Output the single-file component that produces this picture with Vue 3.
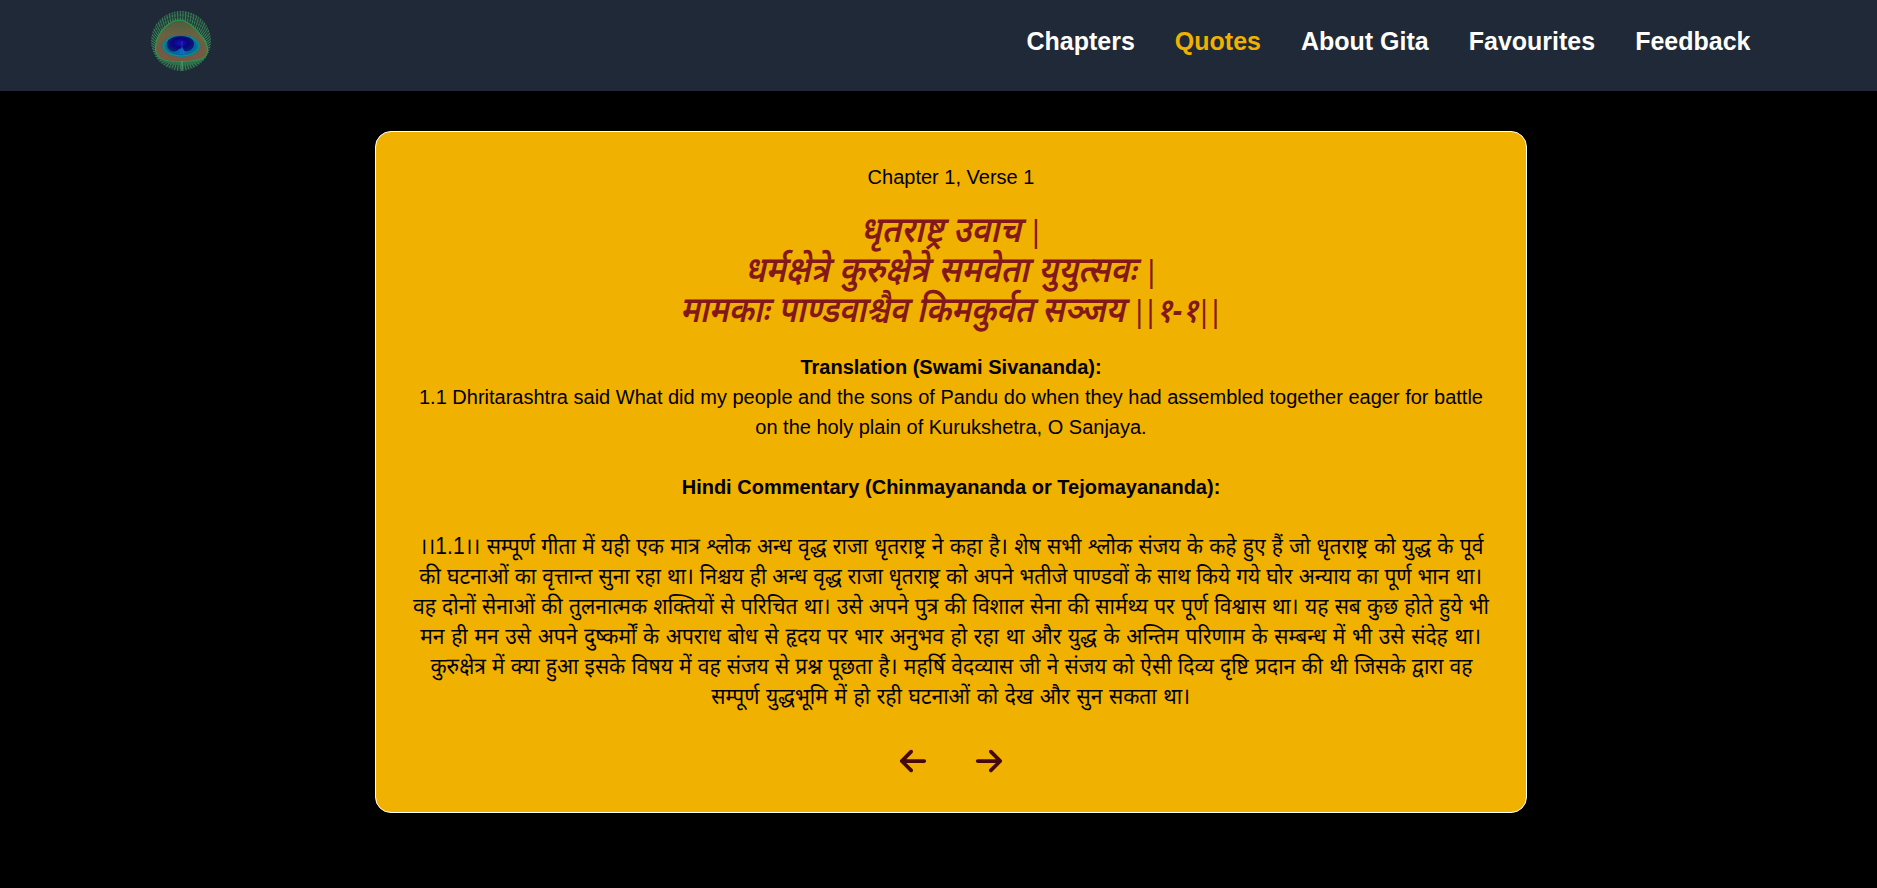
<script setup>
const links = ['Chapters', 'Quotes', 'About Gita', 'Favourites', 'Feedback']
const active = 'Quotes'

// Devanagari is set slightly condensed; each line is justified to its own measure.
const BODY_SCALE = 0.915
const verse = [
  { text: 'धृतराष्ट्र उवाच |', width: 181, scale: 0.9 },
  { text: 'धर्मक्षेत्रे कुरुक्षेत्रे समवेता युयुत्सवः |', width: 413, scale: 0.895 },
  { text: 'मामकाः पाण्डवाश्चैव किमकुर्वत सञ्जय ||१-१||', width: 541, scale: 0.871 },
].map((l) => ({ ...l, parts: l.text.split(/(\||१-१)/).filter(Boolean) }))
const commentary = [
  { text: '।।1.1।। सम्पूर्ण गीता में यही एक मात्र श्लोक अन्ध वृद्ध राजा धृतराष्ट्र ने कहा है। शेष सभी श्लोक संजय के कहे हुए हैं जो धृतराष्ट्र को युद्ध के पूर्व', width: 1064 },
  { text: 'की घटनाओं का वृत्तान्त सुना रहा था। निश्चय ही अन्ध वृद्ध राजा धृतराष्ट्र को अपने भतीजे पाण्डवों के साथ किये गये घोर अन्याय का पूर्ण भान था।', width: 1063 },
  { text: 'वह दोनों सेनाओं की तुलनात्मक शक्तियों से परिचित था। उसे अपने पुत्र की विशाल सेना की सार्मथ्य पर पूर्ण विश्वास था। यह सब कुछ होते हुये भी', width: 1076 },
  { text: 'मन ही मन उसे अपने दुष्कर्मों के अपराध बोध से हृदय पर भार अनुभव हो रहा था और युद्ध के अन्तिम परिणाम के सम्बन्ध में भी उसे संदेह था।', width: 1061 },
  { text: 'कुरुक्षेत्र में क्या हुआ इसके विषय में वह संजय से प्रश्न पूछता है। महर्षि वेदव्यास जी ने संजय को ऐसी दिव्य दृष्टि प्रदान की थी जिसके द्वारा वह', width: 1042 },
  { text: 'सम्पूर्ण युद्धभूमि में हो रही घटनाओं को देख और सुन सकता था।', width: 479 },
]
const lineStyle = (width, scale) => ({ width: `${width / scale}px`, transform: `scaleX(${scale})` })

// Barbs of the feather fan out from the eye.
const barbs = Array.from({ length: 130 }, (_, i) => {
  const a = (i / 130) * Math.PI * 2
  const c = Math.cos(a)
  const s = Math.sin(a)
  return `M${(30 + c * 16).toFixed(1)} ${(34 + s * 9).toFixed(1)}Q${(30 + c * 23).toFixed(1)} ${(36 + s * 19).toFixed(1)} ${(30 + c * 31).toFixed(1)} ${(28 + s * 32).toFixed(1)}`
})
const eyePath = 'M29 9C38 10 46 19 52 27C57 33 58 41 54 46C48 51 38 50 31 51C22 51 11 50 7 45C3 40 4 31 8 24C13 16 20 9 29 9Z'
</script>

<template>
  <div class="page">
    <header class="bar">
      <svg class="logo" viewBox="0 0 60 60" aria-hidden="true">
        <defs>
          <clipPath id="disc"><circle cx="30" cy="30" r="30" /></clipPath>
          <radialGradient id="iris" cx="50%" cy="45%" r="55%">
            <stop offset="0" stop-color="#1a0fb4" />
            <stop offset=".55" stop-color="#0a0480" />
            <stop offset="1" stop-color="#08246f" />
          </radialGradient>
          <linearGradient id="bronze" x1="0" y1="0" x2="0" y2="1">
            <stop offset="0" stop-color="#50613f" />
            <stop offset=".35" stop-color="#786744" />
            <stop offset="1" stop-color="#875a45" />
          </linearGradient>
        </defs>
        <g clip-path="url(#disc)" fill="none">
          <circle cx="30" cy="30" r="30" fill="#285a48" />
          <g stroke-width=".8">
            <path v-for="(d, i) in barbs" :key="i" :d="d" :stroke="i % 2 ? '#4f946c' : '#18322f'" />
          </g>
          <g stroke="#1a3433" stroke-width=".8" stroke-dasharray="2.500 1.500">
            <path d="M3 18Q28-6 57 18M2 23Q28-3 58 23M6 12Q28-8 53 12M2 42Q10 58 31 59Q50 58 58 42" />
          </g>
          <path :d="eyePath" fill="url(#bronze)" />
          <g stroke="#324d3e" stroke-width=".4" opacity=".5">
            <path v-for="(d, i) in barbs" :key="i" :d="d" />
          </g>
          <path :d="eyePath" stroke="#2b9a4c" stroke-width="1.2" />
          <path d="M4 40C6 52 19 53 31 55C44 54 55 52 57 40L54 46C48 51 38 50 31 51C22 51 11 50 7 45Z" fill="#2b7a4c" opacity=".7" />
          <path d="M31 50V60" stroke="#5db67b" stroke-width=".8" />
          <ellipse cx="30.3" cy="35" rx="19" ry="11" fill="#077a86" />
          <ellipse cx="30.3" cy="35" rx="18" ry="10" stroke="#14908a" stroke-width="1" />
          <ellipse cx="30" cy="35" rx="15.500" ry="9" fill="#0862a8" />
          <path d="M30 25C39 25 44 29 43 34C42 39 36 42 32 39C30 37 29 37 27 39C22 43 16 39 16 33C16 28 22 25 30 25Z" fill="url(#iris)" />
          <path d="M31 36L28 43H35Z" fill="#0b70c4" />
          <path d="M31 30V45" stroke="#2055d4" stroke-width=".6" />
        </g>
      </svg>
      <nav class="links">
        <a v-for="l in links" :key="l" :class="{ active: l === active }">{{ l }}</a>
      </nav>
    </header>

    <main class="card">
      <p class="ref">Chapter 1, Verse 1</p>
      <h1 class="verse">
        <span v-for="l in verse" :key="l.text" class="line" :style="lineStyle(l.width, l.scale)"><template v-for="(p, j) in l.parts" :key="j"><i v-if="p === '|'" class="pipe">|</i><i v-else-if="p === '१-१'" class="num">{{ p }}</i><template v-else>{{ p }}</template></template></span>
      </h1>
      <p class="text translation">
        <strong>Translation (Swami Sivananda):</strong><br />
        1.1 Dhritarashtra said What did my people and the sons of Pandu do when they had assembled together eager for battle on the holy plain of Kurukshetra, O Sanjaya.
      </p>
      <p class="text head"><strong>Hindi Commentary (Chinmayananda or Tejomayananda):</strong></p>
      <p class="hindi">
        <span v-for="l in commentary" :key="l.text" class="line" :style="lineStyle(l.width, BODY_SCALE)">{{ l.text }}</span>
      </p>
      <div class="pager">
        <svg viewBox="0 0 448 512"><path d="M9.4 233.4c-12.5 12.5-12.5 32.800 0 45.300l160 160c12.500 12.500 32.800 12.500 45.300 0s12.500-32.800 0-45.300L109.200 288 416 288c17.700 0 32-14.300 32-32s-14.300-32-32-32l-306.700 0L214.600 118.600c12.500-12.500 12.500-32.800 0-45.300s-32.800-12.500-45.300 0l-160 160z" /></svg>
        <svg viewBox="0 0 448 512"><path d="M438.600 278.600c12.500-12.500 12.500-32.800 0-45.300l-160-160c-12.500-12.500-32.800-12.500-45.300 0s-12.500 32.800 0 45.300L338.800 224 32 224c-17.700 0-32 14.300-32 32s14.300 32 32 32l306.700 0L233.400 393.400c-12.500 12.500-12.500 32.800 0 45.300s32.800 12.500 45.300 0l160-160z" /></svg>
      </div>
    </main>
  </div>
</template>

<style>
body {
  background: #000;
}
</style>

<style scoped>
.page {
  min-height: 888px;
  box-sizing: border-box;
  background: #000;
  font-family: "Liberation Sans", "Nirmala UI", "Noto Sans Devanagari", "Noto Sans", sans-serif;
}
.bar {
  height: 91px;
  box-sizing: border-box;
  padding: 11px 126.5px 0 151px;
  display: flex;
  justify-content: space-between;
  background: #1f2937;
}
.logo {
  width: 60px;
  height: 60px;
}
.links {
  display: flex;
  gap: 40px;
  height: 60px;
  line-height: 60px;
  font-size: 25px;
  font-weight: 700;
  color: #fff;
}
.active {
  color: #f0b100;
}
.card {
  width: 1152px;
  height: 682px;
  box-sizing: border-box;
  margin: 40px 0 0 375px;
  padding: 30px 32px 0;
  border: 1px solid #fff;
  border-radius: 16px;
  background: #f0b100;
  color: #000;
  text-align: center;
  font-size: 20px;
  line-height: 30px;
}
p,
h1 {
  margin: 0;
}
.line {
  white-space: nowrap;
  text-align: justify;
  text-align-last: justify;
  flex: none;
}
.verse,
.hindi {
  display: flex;
  flex-direction: column;
  align-items: center;
}
.verse {
  margin-top: 18px;
  font-size: 36px;
  font-weight: 600;
  font-style: italic;
  color: #82181a;
}
.verse .line {
  height: 40px;
  line-height: 40px;
}
.pipe {
  display: inline-block;
  width: 13px;
  font-size: 31px;
  line-height: 30px;
  font-weight: 400;
  font-style: normal;
  text-align: center;
  text-align-last: center;
}
.num {
  font-size: 34px;
  line-height: 30px;
}
.translation {
  margin-top: 22px;
}
.head {
  margin-top: 30px;
}
.hindi {
  margin-top: 29px;
  font-size: 23px;
}
.hindi .line {
  height: 30px;
}
.pager {
  margin-top: 35px;
  display: flex;
  justify-content: center;
  gap: 46px;
}
.pager svg {
  width: 30px;
  height: 30px;
  fill: #460809;
}
</style>
